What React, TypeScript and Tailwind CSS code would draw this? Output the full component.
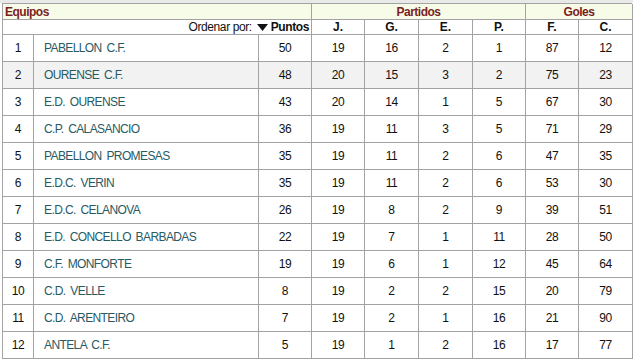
import React from "react";

const rows: [number, string, number, number, number, number, number, number, number][] = [
  [1, "PABELLON C.F.", 50, 19, 16, 2, 1, 87, 12],
  [2, "OURENSE C.F.", 48, 20, 15, 3, 2, 75, 23],
  [3, "E.D. OURENSE", 43, 20, 14, 1, 5, 67, 30],
  [4, "C.P. CALASANCIO", 36, 19, 11, 3, 5, 71, 29],
  [5, "PABELLON PROMESAS", 35, 19, 11, 2, 6, 47, 35],
  [6, "E.D.C. VERIN", 35, 19, 11, 2, 6, 53, 30],
  [7, "E.D.C. CELANOVA", 26, 19, 8, 2, 9, 39, 51],
  [8, "E.D. CONCELLO BARBADAS", 22, 19, 7, 1, 11, 28, 50],
  [9, "C.F. MONFORTE", 19, 19, 6, 1, 12, 45, 64],
  [10, "C.D. VELLE", 8, 19, 2, 2, 15, 20, 79],
  [11, "C.D. ARENTEIRO", 7, 19, 2, 1, 16, 21, 90],
  [12, "ANTELA C.F.", 5, 19, 1, 2, 16, 17, 77],
];

export default function App() {
  const cell =
    "h-[27px] flex items-center justify-center border-r border-b border-r-[#a3a3a3] border-b-[#a3a3a3] border-b-dotted text-[12px] tracking-[-0.4px] text-[#111]";
  return (
    <div className="w-[633px] h-[360px] bg-white font-['Liberation_Sans',Arial,sans-serif] overflow-hidden">
      <div className="h-[3px] bg-[#e9e9e9]" />
      <div className="pl-[2px]">
        <div className="grid grid-cols-[31px_225px_53px_53px_54px_54px_53px_53px_54px] w-[630px] border-l border-t border-[#a3a3a3]">
          <div className="col-span-3 h-[16px] flex items-center pl-[2px] bg-[#f7fce8] border-r border-b border-[#a3a3a3] text-[12px] tracking-[-0.5px] font-bold text-[#7a1f1f]">
            Equipos
          </div>
          <div className="col-span-4 h-[16px] flex items-center justify-center bg-[#f7fce8] border-r border-b border-[#a3a3a3] text-[12px] tracking-[-0.5px] font-bold text-[#7a1f1f]">
            Partidos
          </div>
          <div className="col-span-2 h-[16px] flex items-center justify-center bg-[#f7fce8] border-r border-b border-[#a3a3a3] text-[12px] tracking-[-0.5px] font-bold text-[#7a1f1f]">
            Goles
          </div>
          <div className="col-span-3 h-[15px] flex items-center justify-end pr-[2px] border-r border-b border-[#a3a3a3] text-[12px] tracking-[-0.4px] text-[#111]">
            <span>Ordenar por:</span>
            <svg width="11" height="7" viewBox="0 0 11 7" className="ml-[5px] mr-[3px]">
              <polygon points="0,0 11,0 5.5,7" fill="#111" />
            </svg>
            <span className="font-bold">Puntos</span>
          </div>
          {["J.", "G.", "E.", "P.", "F.", "C."].map((h) => (
            <div key={h} className="h-[15px] flex items-center justify-center border-r border-b border-[#a3a3a3] text-[12px] font-bold text-[#111]">
              {h}
            </div>
          ))}
          {rows.map((r) => {
            const bg = r[0] === 2 ? "bg-[#f2f2f2]" : "bg-white";
            return (
              <React.Fragment key={r[0]}>
                <div className={`${cell} ${bg}`}>{r[0]}</div>
                <div className={`${cell} ${bg} justify-start! pl-[10px] text-[#285a64]! tracking-[-0.6px]! [word-spacing:2px] whitespace-pre`}>{r[1]}</div>
                {r.slice(2).map((v, i) => (
                  <div key={i} className={`${cell} ${bg}`}>
                    {v}
                  </div>
                ))}
              </React.Fragment>
            );
          })}
        </div>
      </div>
    </div>
  );
}
